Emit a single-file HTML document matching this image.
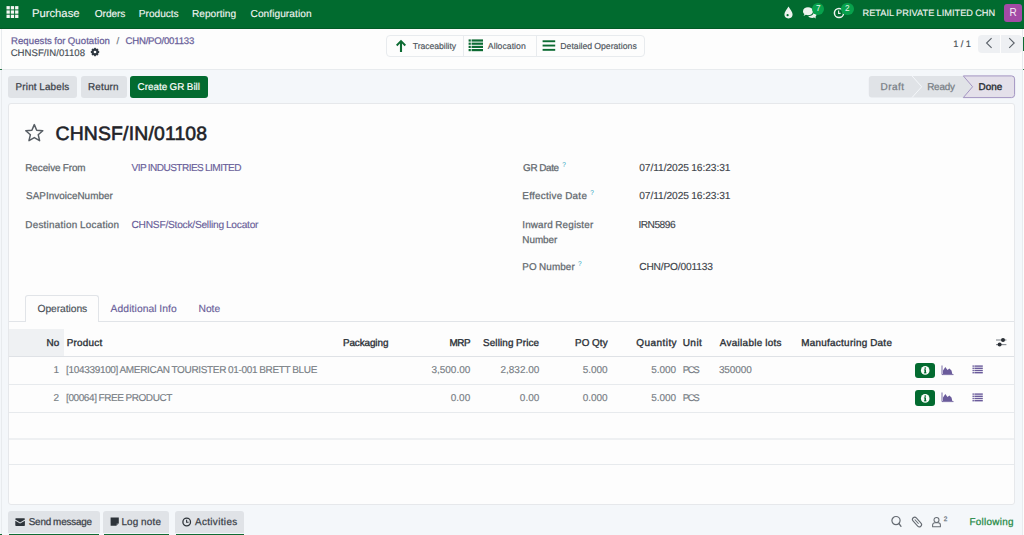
<!DOCTYPE html>
<html><head><meta charset="utf-8"><style>
*{margin:0;padding:0;box-sizing:border-box}
html,body{width:1024px;height:535px;overflow:hidden;background:#f4f7fa;font-family:"Liberation Sans",sans-serif}
.a{position:absolute}
.t{position:absolute;white-space:nowrap;line-height:normal;text-rendering:geometricPrecision}
.bl{display:inline-block;width:0;height:0;vertical-align:baseline}
</style></head><body>
<!-- navbar -->
<div class="a" style="left:0;top:0;width:1024px;height:28.6px;background:#016b2f"></div>
<div class="a" style="left:0;top:27.8px;width:1024px;height:0.9px;background:#015a26"></div>
<svg class="a" style="left:6.2px;top:5.9px" width="14" height="13" viewBox="0 0 14 13"><g fill="#f3f6f3"><rect x="0.5" y="0.1" width="3.3" height="3.3"/><rect x="4.8" y="0.1" width="3.3" height="3.3"/><rect x="9.1" y="0.1" width="3.3" height="3.3"/><rect x="0.5" y="4.4" width="3.3" height="3.3"/><rect x="4.8" y="4.4" width="3.3" height="3.3"/><rect x="9.1" y="4.4" width="3.3" height="3.3"/><rect x="0.5" y="8.7" width="3.3" height="3.3"/><rect x="4.8" y="8.7" width="3.3" height="3.3"/><rect x="9.1" y="8.7" width="3.3" height="3.3"/></g></svg>
<!-- droplet -->
<svg class="a" style="left:783px;top:6px" width="11" height="13" viewBox="0 0 11 13">
 <path d="M5.5 0.6 C7 3.2 9.6 6 9.6 8.3 A4.1 4.1 0 0 1 1.4 8.3 C1.4 6 4 3.2 5.5 0.6Z" fill="#eef3ee"/>
 <circle cx="4.6" cy="9.2" r="1.1" fill="#016b2f"/>
</svg>
<!-- chat bubbles -->
<svg class="a" style="left:802px;top:6px" width="16" height="13" viewBox="0 0 16 13">
 <path d="M1 5.2 C1 2.6 3.3 1.2 6 1.2 C8.7 1.2 11 2.6 11 5.2 C11 7.8 8.7 9.2 6 9.2 C5.2 9.2 4.5 9.1 3.9 8.8 L1.6 10 L2.4 8.1 C1.5 7.4 1 6.4 1 5.2Z" fill="#eef3ee"/>
 <path d="M6.2 10.3 C9.5 10.2 11.9 8.5 12.1 5.6 C13.6 6.2 14.5 7.3 14.5 8.6 C14.5 9.5 14.1 10.3 13.4 10.9 L14.1 12.6 L12 11.6 C11.5 11.8 10.9 11.9 10.3 11.9 C8.5 11.9 7 11.3 6.2 10.3Z" fill="#eef3ee"/>
</svg>
<div class="a" style="left:812px;top:2.8px;width:12.4px;height:12.4px;border-radius:50%;background:#08a14c"></div>
<div class="a" style="left:812px;top:3px;width:12.4px;text-align:center;font:8.2px 'Liberation Sans',sans-serif;color:#e8f3ea;line-height:12px">7</div>
<!-- clock -->
<svg class="a" style="left:833px;top:6px" width="13" height="13" viewBox="0 0 13 13">
 <circle cx="6" cy="7" r="4.6" fill="none" stroke="#eef3ee" stroke-width="1.5"/>
 <path d="M5.6 4.6 V7.4 H7.6" fill="none" stroke="#eef3ee" stroke-width="1.1"/>
</svg>
<div class="a" style="left:841.2px;top:2.8px;width:12.4px;height:12.4px;border-radius:50%;background:#08a14c"></div>
<div class="a" style="left:841.2px;top:3px;width:12.4px;text-align:center;font:8.2px 'Liberation Sans',sans-serif;color:#e8f3ea;line-height:12px">2</div>
<!-- avatar -->
<div class="a" style="left:1004px;top:4px;width:18px;height:17.6px;border-radius:3px;background:#a34aa6"></div>
<div class="a" style="left:1004px;top:4px;width:18px;height:17.6px;text-align:center;font:10px 'Liberation Sans',sans-serif;color:#f5eaf5;line-height:17.6px">R</div>

<!-- control panel -->
<div class="a" style="left:0;top:28.5px;width:1024px;height:41px;background:#fdfdfd;border-bottom:1px solid #e8ebee"></div>
<!-- gear -->
<svg class="a" style="left:90.3px;top:46.9px" width="10" height="10" viewBox="0 0 10 10">
 <g fill="#2f3841">
  <circle cx="5" cy="5" r="3.5"/>
  <rect x="4.1" y="0.8" width="1.8" height="8.4" rx="0.5"/>
  <rect x="4.1" y="0.8" width="1.8" height="8.4" rx="0.5" transform="rotate(45 5 5)"/>
  <rect x="4.1" y="0.8" width="1.8" height="8.4" rx="0.5" transform="rotate(90 5 5)"/>
  <rect x="4.1" y="0.8" width="1.8" height="8.4" rx="0.5" transform="rotate(135 5 5)"/>
 </g>
 <circle cx="5" cy="5" r="1.3" fill="#fdfdfd"/>
</svg>
<!-- button group -->
<div class="a" style="left:386.2px;top:34.8px;width:258.5px;height:22.7px;border:1px solid #e8ebee;border-radius:4px;background:#fdfdfd"></div>
<div class="a" style="left:463px;top:35px;width:1px;height:22.4px;background:#e8ebee"></div>
<div class="a" style="left:536px;top:35px;width:1px;height:22.4px;background:#e8ebee"></div>
<svg class="a" style="left:395px;top:39px" width="12" height="14" viewBox="0 0 12 14">
 <path d="M6 0.8 L11 5.8 L9.6 7.2 L7.05 4.6 V13 H4.95 V4.6 L2.4 7.2 L1 5.8Z" fill="#0d6b33"/>
</svg>
<svg class="a" style="left:468px;top:39px" width="16" height="13" viewBox="0 0 16 13">
 <g fill="#0d6b33">
  <rect x="0.6" y="0.4" width="2.2" height="2.2"/><rect x="3.6" y="0.4" width="11.4" height="2.2"/>
  <rect x="0.6" y="3.6" width="2.2" height="2.2"/><rect x="3.6" y="3.6" width="11.4" height="2.2"/>
  <rect x="0.6" y="6.8" width="2.2" height="2.2"/><rect x="3.6" y="6.8" width="11.4" height="2.2"/>
  <rect x="0.6" y="10" width="2.2" height="2.2"/><rect x="3.6" y="10" width="11.4" height="2.2"/>
 </g>
</svg>
<svg class="a" style="left:542px;top:40px" width="14" height="12" viewBox="0 0 14 12">
 <g fill="#0d6b33">
  <rect x="0.6" y="0.3" width="12.6" height="1.9"/>
  <rect x="0.6" y="4.6" width="12.6" height="1.9"/>
  <rect x="0.6" y="8.9" width="12.6" height="1.9"/>
 </g>
</svg>
<!-- pager -->
<div class="a" style="left:978.1px;top:34.8px;width:21.9px;height:17.8px;background:#eef0f3;border-radius:4px 0 0 4px"></div>
<div class="a" style="left:1001px;top:34.8px;width:21.3px;height:17.8px;background:#eef0f3;border-radius:0 4px 4px 0"></div>
<svg class="a" style="left:984px;top:37px" width="10" height="12" viewBox="0 0 10 12">
 <path d="M7.6 1.2 L2.6 6 L7.6 10.8" fill="none" stroke="#5a6068" stroke-width="1.1"/>
</svg>
<svg class="a" style="left:1007px;top:37px" width="10" height="12" viewBox="0 0 10 12">
 <path d="M2.2 1.2 L7.2 6 L2.2 10.8" fill="none" stroke="#5a6068" stroke-width="1.1"/>
</svg>

<!-- frame lines -->
<div class="a" style="left:1px;top:28.5px;width:1px;height:507px;background:#e8ebee"></div>
<div class="a" style="left:1022px;top:28.5px;width:1px;height:507px;background:#e8ebee"></div>
<div class="a" style="left:1023px;top:28.5px;width:1px;height:507px;background:#fdfdfd"></div>

<!-- action buttons -->
<div class="a" style="left:8.2px;top:75.8px;width:68.7px;height:22.1px;background:#e0e3e7;border-radius:3px"></div>
<div class="a" style="left:80.6px;top:75.8px;width:46.1px;height:22.1px;background:#e0e3e7;border-radius:3px"></div>
<div class="a" style="left:129.5px;top:75.8px;width:78px;height:22.1px;background:#036b30;border-radius:3px"></div>

<!-- statusbar -->
<svg class="a" style="left:868px;top:75px" width="148" height="24" viewBox="0 0 148 24">
 <path d="M3.8 0.9 H44 L53.7 11.75 L44 22.6 H3.8 A3 3 0 0 1 0.8 19.6 V3.9 A3 3 0 0 1 3.8 0.9Z" fill="#e0e3e7"/>
 <path d="M44 0.9 H95.3 L104.6 11.75 L95.3 22.6 H44 L53.7 11.75Z" fill="#e0e3e7"/>
 <path d="M44 0.9 L53.7 11.75 L44 22.6" fill="none" stroke="#f4f7fa" stroke-width="1"/>
 <path d="M95.3 0.9 H143.6 A3 3 0 0 1 146.6 3.9 V19.6 A3 3 0 0 1 143.6 22.6 H95.3 L104.6 11.75Z" fill="#e4e0ea" stroke="#a395c2" stroke-width="1"/>
</svg>

<!-- sheet -->
<div class="a" style="left:8px;top:103.2px;width:1007px;height:401.8px;background:#fdfdfd;border:1px solid #e6e8eb;border-radius:3px"></div>
<svg class="a" style="left:24px;top:122.5px" width="21" height="20" viewBox="0 0 21 20">
 <path d="M10.3 1.6 L12.7 7.2 L18.8 7.7 L14.2 11.7 L15.6 17.7 L10.3 14.6 L5 17.7 L6.4 11.7 L1.8 7.7 L7.9 7.2Z" fill="none" stroke="#575d64" stroke-width="1.5" stroke-linejoin="round"/>
</svg>
<!-- tooltips -->
<div class="a" style="left:562.2px;top:161px;font:6.5px 'Liberation Sans',sans-serif;color:#2aa3c0">?</div>
<div class="a" style="left:590.2px;top:189px;font:6.5px 'Liberation Sans',sans-serif;color:#2aa3c0">?</div>
<div class="a" style="left:578px;top:260px;font:6.5px 'Liberation Sans',sans-serif;color:#2aa3c0">?</div>

<!-- tabs -->
<div class="a" style="left:9px;top:321px;width:1005px;height:1px;background:#e1e4e8"></div>
<div class="a" style="left:25.3px;top:295px;width:74px;height:27px;background:#fdfdfd;border:1px solid #e1e4e8;border-bottom:none;border-radius:3px 3px 0 0"></div>

<!-- table -->
<div class="a" style="left:9px;top:329px;width:55px;height:27.5px;background:#eff1f3"></div>
<div class="a" style="left:9px;top:356px;width:1005px;height:1.2px;background:#dfe2e6"></div>
<div class="a" style="left:9px;top:383.6px;width:1005px;height:1px;background:#e7eaed"></div>
<div class="a" style="left:9px;top:411.6px;width:1005px;height:1px;background:#e7eaed"></div>
<div class="a" style="left:9px;top:438px;width:1005px;height:2px;background:#eef0f2"></div>
<div class="a" style="left:9px;top:464.4px;width:1005px;height:1px;background:#e7eaed"></div>
<svg class="a" style="left:994px;top:336px" width="15" height="12" viewBox="0 0 15 12">
 <g stroke="#8b9096" stroke-width="1.2"><path d="M2 4 H12.4"/><path d="M2 8.6 H12.4"/></g>
 <circle cx="9" cy="4" r="2" fill="#2b3036"/><circle cx="5.6" cy="8.6" r="2" fill="#2b3036"/>
</svg>
<!-- row icons -->
<div class="a" style="left:914.8px;top:362.8px;width:20.6px;height:15.7px;background:#036b30;border-radius:3px"></div>
<div class="a" style="left:914.8px;top:390px;width:20.6px;height:16.2px;background:#036b30;border-radius:3px"></div>
<svg class="a" style="left:919.6px;top:365.2px" width="11" height="11" viewBox="0 0 11 11">
 <circle cx="5.2" cy="5.4" r="4.3" fill="#fbfdfb"/>
 <rect x="4.5" y="4.5" width="1.5" height="3.6" fill="#036b30"/><rect x="3.9" y="7.4" width="2.6" height="0.9" fill="#036b30"/><rect x="3.9" y="4.5" width="1.6" height="0.8" fill="#036b30"/>
 <circle cx="5.25" cy="3" r="0.85" fill="#036b30"/>
</svg>
<svg class="a" style="left:919.6px;top:392.6px" width="11" height="11" viewBox="0 0 11 11">
 <circle cx="5.2" cy="5.4" r="4.3" fill="#fbfdfb"/>
 <rect x="4.5" y="4.5" width="1.5" height="3.6" fill="#036b30"/><rect x="3.9" y="7.4" width="2.6" height="0.9" fill="#036b30"/><rect x="3.9" y="4.5" width="1.6" height="0.8" fill="#036b30"/>
 <circle cx="5.25" cy="3" r="0.85" fill="#036b30"/>
</svg>
<svg class="a" style="left:941px;top:365px" width="13" height="11" viewBox="0 0 13 11">
 <path d="M1 0.5 V9.6 H12.5" fill="none" stroke="#6a5b9b" stroke-width="0.9"/>
 <path d="M2 9 L2 5.5 L4.3 2 L6.5 5 L8.4 3.6 L10.5 5.6 L11.3 9Z" fill="#6a5b9b"/>
</svg>
<svg class="a" style="left:941px;top:392.2px" width="13" height="11" viewBox="0 0 13 11">
 <path d="M1 0.5 V9.6 H12.5" fill="none" stroke="#6a5b9b" stroke-width="0.9"/>
 <path d="M2 9 L2 5.5 L4.3 2 L6.5 5 L8.4 3.6 L10.5 5.6 L11.3 9Z" fill="#6a5b9b"/>
</svg>
<svg class="a" style="left:971.5px;top:365px" width="12" height="10" viewBox="0 0 12 10">
 <g fill="#6a5b9b">
  <rect x="0.5" y="0.4" width="1.4" height="1.4"/><rect x="2.4" y="0.4" width="8.4" height="1.4"/>
  <rect x="0.5" y="2.6" width="1.4" height="1.4"/><rect x="2.4" y="2.6" width="8.4" height="1.4"/>
  <rect x="0.5" y="4.8" width="1.4" height="1.4"/><rect x="2.4" y="4.8" width="8.4" height="1.4"/>
  <rect x="0.5" y="7" width="1.4" height="1.4"/><rect x="2.4" y="7" width="8.4" height="1.4"/>
 </g>
</svg>
<svg class="a" style="left:971.5px;top:392.6px" width="12" height="10" viewBox="0 0 12 10">
 <g fill="#6a5b9b">
  <rect x="0.5" y="0.4" width="1.4" height="1.4"/><rect x="2.4" y="0.4" width="8.4" height="1.4"/>
  <rect x="0.5" y="2.6" width="1.4" height="1.4"/><rect x="2.4" y="2.6" width="8.4" height="1.4"/>
  <rect x="0.5" y="4.8" width="1.4" height="1.4"/><rect x="2.4" y="4.8" width="8.4" height="1.4"/>
  <rect x="0.5" y="7" width="1.4" height="1.4"/><rect x="2.4" y="7" width="8.4" height="1.4"/>
 </g>
</svg>

<!-- chatter -->
<div class="a" style="left:8.2px;top:511.3px;width:91.4px;height:21.9px;background:#e0e3e7;border-radius:3px 3px 0 0"></div>
<div class="a" style="left:103.2px;top:511.3px;width:65.8px;height:21.9px;background:#e0e3e7;border-radius:3px 3px 0 0"></div>
<div class="a" style="left:175.3px;top:511.3px;width:69px;height:21.9px;background:#e0e3e7;border-radius:3px 3px 0 0"></div>
<div class="a" style="left:9px;top:533.8px;width:89.5px;height:1.2px;background:#0f6b33"></div>
<div class="a" style="left:104px;top:533.8px;width:64.5px;height:1.2px;background:#0f6b33"></div>
<div class="a" style="left:176px;top:533.8px;width:67.5px;height:1.2px;background:#0f6b33"></div>
<svg class="a" style="left:15px;top:518px" width="11" height="9" viewBox="0 0 11 9">
 <path d="M0.3 1 A0.8 0.8 0 0 1 1.1 0.2 H9.1 A0.8 0.8 0 0 1 9.9 1 V1.6 L5.1 4.6 L0.3 1.6Z" fill="#2e343a"/>
 <path d="M0.3 2.7 L5.1 5.6 L9.9 2.7 V7.3 A0.8 0.8 0 0 1 9.1 8.1 H1.1 A0.8 0.8 0 0 1 0.3 7.3Z" fill="#2e343a"/>
</svg>
<svg class="a" style="left:110px;top:517px" width="10" height="10" viewBox="0 0 10 10">
 <path d="M0.6 0.6 H8.8 V6.2 L6.2 8.8 H0.6Z" fill="#2e343a"/>
 <path d="M6.6 8.8 V6.6 H8.8Z" fill="#8a9096"/>
</svg>
<svg class="a" style="left:182px;top:517px" width="10" height="10" viewBox="0 0 10 10">
 <circle cx="4.7" cy="5" r="3.8" fill="none" stroke="#2e343a" stroke-width="1.3"/>
 <path d="M4.6 2.8 V5.3 H6.6" fill="none" stroke="#2e343a" stroke-width="1.1"/>
</svg>
<svg class="a" style="left:890px;top:514px" width="13" height="14" viewBox="0 0 13 14">
 <circle cx="6" cy="6.6" r="4.1" fill="none" stroke="#666c73" stroke-width="1.2"/>
 <path d="M8.9 9.5 L11 12.3" stroke="#666c73" stroke-width="1.3" stroke-linecap="round"/>
</svg>
<svg class="a" style="left:910px;top:515px" width="14" height="14" viewBox="0 0 14 14">
 <g transform="rotate(-42 7 7)">
  <rect x="4.8" y="1.3" width="4.4" height="11.4" rx="2.2" fill="none" stroke="#666c73" stroke-width="1.1"/>
  <path d="M7 3.6 V9.4" stroke="#666c73" stroke-width="1"/>
 </g>
</svg>
<svg class="a" style="left:930.5px;top:515.5px" width="11" height="12" viewBox="0 0 11 12">
 <circle cx="5.5" cy="3.9" r="2.5" fill="none" stroke="#666c73" stroke-width="1.05"/>
 <path d="M1.6 10.8 V9 A2.3 2.3 0 0 1 3.9 6.7 H7.1 A2.3 2.3 0 0 1 9.4 9 V10.8Z" fill="none" stroke="#666c73" stroke-width="1.05" stroke-linejoin="round"/>
</svg>

<div class="a" style="left:0;top:68.6px;width:1.6px;height:1.2px;background:#2f7a4a"></div>
<div class="a" style="left:1023px;top:36.8px;width:1px;height:14px;background:#0f6b33"></div>
<div class="a" style="left:1023px;top:68.6px;width:1px;height:1.2px;background:#2f7a4a"></div>
<div class="a" style="left:0;top:533.6px;width:1.5px;height:1.4px;background:#0f6b33"></div>
<div class="t" id="nav_app" style="left:31.92px;top:7.90px;font-size:11.30px;letter-spacing:-0.012px;word-spacing:-0.52px;color:#f1f5f2;-webkit-text-stroke:0.12px currentColor;">Purchase<i class="bl"></i></div>
<div class="t" id="nav_o" style="left:94.86px;top:8.61px;font-size:10.15px;letter-spacing:-0.112px;word-spacing:-0.47px;color:#f1f5f2;-webkit-text-stroke:0.12px currentColor;">Orders<i class="bl"></i></div>
<div class="t" id="nav_p" style="left:138.86px;top:8.61px;font-size:10.15px;letter-spacing:-0.027px;word-spacing:-0.47px;color:#f1f5f2;-webkit-text-stroke:0.12px currentColor;">Products<i class="bl"></i></div>
<div class="t" id="nav_r" style="left:191.92px;top:8.61px;font-size:10.15px;letter-spacing:0.031px;word-spacing:-0.47px;color:#f1f5f2;-webkit-text-stroke:0.12px currentColor;">Reporting<i class="bl"></i></div>
<div class="t" id="nav_c" style="left:250.50px;top:8.61px;font-size:10.15px;letter-spacing:0.067px;word-spacing:-0.47px;color:#f1f5f2;-webkit-text-stroke:0.12px currentColor;">Configuration<i class="bl"></i></div>
<div class="t" id="nav_co" style="left:862.50px;top:8.21px;font-size:9.20px;letter-spacing:0.042px;word-spacing:-0.42px;color:#f1f5f2;-webkit-text-stroke:0.12px currentColor;">RETAIL PRIVATE LIMITED CHN<i class="bl"></i></div>
<div class="t" id="bc1" style="left:11.00px;top:35.71px;font-size:9.60px;letter-spacing:0.052px;word-spacing:-0.44px;color:#6a5f9a;-webkit-text-stroke:0.25px currentColor;">Requests for Quotation<i class="bl"></i></div>
<div class="t" id="bc_sl" style="left:116.44px;top:35.71px;font-size:9.60px;letter-spacing:0.000px;word-spacing:-0.44px;color:#6c757d;-webkit-text-stroke:0.15px currentColor;">/<i class="bl"></i></div>
<div class="t" id="bc2" style="left:125.50px;top:35.71px;font-size:9.60px;letter-spacing:-0.211px;word-spacing:-0.44px;color:#6a5f9a;-webkit-text-stroke:0.25px currentColor;">CHN/PO/001133<i class="bl"></i></div>
<div class="t" id="bc3" style="left:10.64px;top:47.51px;font-size:9.60px;letter-spacing:0.037px;word-spacing:-0.44px;color:#495057;-webkit-text-stroke:0.15px currentColor;">CHNSF/IN/01108<i class="bl"></i></div>
<div class="t" id="bg1" style="left:412.72px;top:40.81px;font-size:8.70px;letter-spacing:-0.063px;word-spacing:-0.40px;color:#4d545b;-webkit-text-stroke:0.15px currentColor;">Traceability<i class="bl"></i></div>
<div class="t" id="bg2" style="left:487.86px;top:40.81px;font-size:8.70px;letter-spacing:0.027px;word-spacing:-0.40px;color:#4d545b;-webkit-text-stroke:0.15px currentColor;">Allocation<i class="bl"></i></div>
<div class="t" id="bg3" style="left:560.28px;top:40.81px;font-size:8.70px;letter-spacing:0.005px;word-spacing:-0.40px;color:#4d545b;-webkit-text-stroke:0.15px currentColor;">Detailed Operations<i class="bl"></i></div>
<div class="t" id="pager" style="left:953.28px;top:37.60px;font-size:9.40px;letter-spacing:0.059px;word-spacing:-0.43px;color:#495057;-webkit-text-stroke:0.15px currentColor;">1 / 1<i class="bl"></i></div>
<div class="t" id="b_pl" style="left:15.50px;top:82.01px;font-size:9.90px;letter-spacing:0.189px;word-spacing:-0.46px;color:#3b4148;-webkit-text-stroke:0.25px currentColor;">Print Labels<i class="bl"></i></div>
<div class="t" id="b_rt" style="left:88.00px;top:82.01px;font-size:9.90px;letter-spacing:0.180px;word-spacing:-0.46px;color:#3b4148;-webkit-text-stroke:0.25px currentColor;">Return<i class="bl"></i></div>
<div class="t" id="b_gr" style="left:137.50px;top:82.01px;font-size:9.90px;letter-spacing:0.027px;word-spacing:-0.46px;color:#ffffff;-webkit-text-stroke:0.15px currentColor;">Create GR Bill<i class="bl"></i></div>
<div class="t" id="st_d" style="left:880.50px;top:82.01px;font-size:10.00px;letter-spacing:0.450px;word-spacing:-0.46px;color:#787e85;-webkit-text-stroke:0.25px currentColor;">Draft<i class="bl"></i></div>
<div class="t" id="st_r" style="left:927.14px;top:82.01px;font-size:9.90px;letter-spacing:-0.153px;word-spacing:-0.46px;color:#787e85;-webkit-text-stroke:0.25px currentColor;">Ready<i class="bl"></i></div>
<div class="t" id="st_dn" style="left:978.50px;top:82.01px;font-size:9.90px;letter-spacing:0.013px;word-spacing:-0.46px;color:#2a2f35;-webkit-text-stroke:0.25px currentColor;-webkit-text-stroke:0.4px currentColor;">Done<i class="bl"></i></div>
<div class="t" id="title" style="left:55.50px;top:123.10px;font-size:19.40px;letter-spacing:0.164px;word-spacing:-0.89px;color:#1f2328;-webkit-text-stroke:0.6px currentColor;">CHNSF/IN/01108<i class="bl"></i></div>
<div class="t" id="l1" style="left:25.28px;top:162.81px;font-size:9.90px;letter-spacing:-0.066px;word-spacing:-0.46px;color:#62686e;-webkit-text-stroke:0.25px currentColor;">Receive From<i class="bl"></i></div>
<div class="t" id="v1" style="left:131.50px;top:162.90px;font-size:10.08px;letter-spacing:-0.550px;word-spacing:-0.46px;color:#6a5f9a;-webkit-text-stroke:0.15px currentColor;">VIP INDUSTRIES LIMITED<i class="bl"></i></div>
<div class="t" id="l2" style="left:26.08px;top:190.71px;font-size:9.90px;letter-spacing:0.032px;word-spacing:-0.46px;color:#62686e;-webkit-text-stroke:0.25px currentColor;">SAPInvoiceNumber<i class="bl"></i></div>
<div class="t" id="l3" style="left:25.28px;top:220.01px;font-size:9.90px;letter-spacing:0.251px;word-spacing:-0.46px;color:#62686e;-webkit-text-stroke:0.25px currentColor;">Destination Location<i class="bl"></i></div>
<div class="t" id="v3" style="left:131.50px;top:220.11px;font-size:10.20px;letter-spacing:-0.237px;word-spacing:-0.47px;color:#6a5f9a;-webkit-text-stroke:0.15px currentColor;">CHNSF/Stock/Selling Locator<i class="bl"></i></div>
<div class="t" id="r1" style="left:523.08px;top:162.81px;font-size:9.90px;letter-spacing:-0.326px;word-spacing:-0.46px;color:#62686e;-webkit-text-stroke:0.25px currentColor;">GR Date<i class="bl"></i></div>
<div class="t" id="rv1" style="left:639.22px;top:162.90px;font-size:10.20px;letter-spacing:-0.053px;word-spacing:-0.47px;color:#3f454c;-webkit-text-stroke:0.15px currentColor;">07/11/2025 16:23:31<i class="bl"></i></div>
<div class="t" id="r2" style="left:522.28px;top:190.71px;font-size:9.90px;letter-spacing:0.290px;word-spacing:-0.46px;color:#62686e;-webkit-text-stroke:0.25px currentColor;">Effective Date<i class="bl"></i></div>
<div class="t" id="rv2" style="left:639.22px;top:190.81px;font-size:10.20px;letter-spacing:-0.053px;word-spacing:-0.47px;color:#3f454c;-webkit-text-stroke:0.15px currentColor;">07/11/2025 16:23:31<i class="bl"></i></div>
<div class="t" id="r3" style="left:522.28px;top:219.91px;font-size:9.90px;letter-spacing:0.161px;word-spacing:-0.46px;color:#62686e;-webkit-text-stroke:0.25px currentColor;">Inward Register<i class="bl"></i></div>
<div class="t" id="r3b" style="left:522.28px;top:234.60px;font-size:9.90px;letter-spacing:0.000px;word-spacing:-0.46px;color:#62686e;-webkit-text-stroke:0.25px currentColor;">Number<i class="bl"></i></div>
<div class="t" id="rv3" style="left:638.42px;top:220.01px;font-size:10.20px;letter-spacing:-0.498px;word-spacing:-0.47px;color:#3f454c;-webkit-text-stroke:0.15px currentColor;">IRN5896<i class="bl"></i></div>
<div class="t" id="r4" style="left:522.28px;top:261.81px;font-size:9.90px;letter-spacing:0.098px;word-spacing:-0.46px;color:#62686e;-webkit-text-stroke:0.25px currentColor;">PO Number<i class="bl"></i></div>
<div class="t" id="rv4" style="left:639.22px;top:261.90px;font-size:10.20px;letter-spacing:-0.174px;word-spacing:-0.47px;color:#3f454c;-webkit-text-stroke:0.15px currentColor;">CHN/PO/001133<i class="bl"></i></div>
<div class="t" id="tab1" style="left:37.50px;top:304.01px;font-size:10.30px;letter-spacing:-0.074px;word-spacing:-0.47px;color:#495057;-webkit-text-stroke:0.15px currentColor;">Operations<i class="bl"></i></div>
<div class="t" id="tab2" style="left:110.58px;top:304.01px;font-size:10.30px;letter-spacing:0.091px;word-spacing:-0.47px;color:#6a5f9a;-webkit-text-stroke:0.15px currentColor;">Additional Info<i class="bl"></i></div>
<div class="t" id="tab3" style="left:198.56px;top:304.01px;font-size:10.30px;letter-spacing:-0.044px;word-spacing:-0.47px;color:#6a5f9a;-webkit-text-stroke:0.15px currentColor;">Note<i class="bl"></i></div>
<div class="t" id="h_no" style="left:46.42px;top:337.51px;font-size:9.90px;letter-spacing:0.228px;word-spacing:-0.46px;color:#2b3036;-webkit-text-stroke:0.25px currentColor;-webkit-text-stroke:0.35px currentColor;">No<i class="bl"></i></div>
<div class="t" id="h_pr" style="left:66.64px;top:337.51px;font-size:9.90px;letter-spacing:0.274px;word-spacing:-0.46px;color:#2b3036;-webkit-text-stroke:0.25px currentColor;-webkit-text-stroke:0.35px currentColor;">Product<i class="bl"></i></div>
<div class="t" id="h_pk" style="left:342.92px;top:337.51px;font-size:9.90px;letter-spacing:-0.079px;word-spacing:-0.46px;color:#2b3036;-webkit-text-stroke:0.25px currentColor;-webkit-text-stroke:0.35px currentColor;">Packaging<i class="bl"></i></div>
<div class="t" id="h_mrp" style="left:449.50px;top:337.51px;font-size:9.90px;letter-spacing:-0.439px;word-spacing:-0.46px;color:#2b3036;-webkit-text-stroke:0.25px currentColor;-webkit-text-stroke:0.35px currentColor;">MRP<i class="bl"></i></div>
<div class="t" id="h_sp" style="left:483.00px;top:337.51px;font-size:9.90px;letter-spacing:0.134px;word-spacing:-0.46px;color:#2b3036;-webkit-text-stroke:0.25px currentColor;-webkit-text-stroke:0.35px currentColor;">Selling Price<i class="bl"></i></div>
<div class="t" id="h_po" style="left:575.00px;top:337.51px;font-size:9.90px;letter-spacing:0.157px;word-spacing:-0.46px;color:#2b3036;-webkit-text-stroke:0.25px currentColor;-webkit-text-stroke:0.35px currentColor;">PO Qty<i class="bl"></i></div>
<div class="t" id="h_q" style="left:636.22px;top:337.50px;font-size:10.01px;letter-spacing:0.450px;word-spacing:-0.46px;color:#2b3036;-webkit-text-stroke:0.25px currentColor;-webkit-text-stroke:0.35px currentColor;">Quantity<i class="bl"></i></div>
<div class="t" id="h_u" style="left:682.64px;top:337.51px;font-size:10.08px;letter-spacing:0.450px;word-spacing:-0.46px;color:#2b3036;-webkit-text-stroke:0.25px currentColor;-webkit-text-stroke:0.35px currentColor;">Unit<i class="bl"></i></div>
<div class="t" id="h_al" style="left:719.72px;top:337.51px;font-size:9.90px;letter-spacing:0.326px;word-spacing:-0.46px;color:#2b3036;-webkit-text-stroke:0.25px currentColor;-webkit-text-stroke:0.35px currentColor;">Available lots<i class="bl"></i></div>
<div class="t" id="h_md" style="left:801.14px;top:337.51px;font-size:9.90px;letter-spacing:0.296px;word-spacing:-0.46px;color:#2b3036;-webkit-text-stroke:0.25px currentColor;-webkit-text-stroke:0.35px currentColor;">Manufacturing Date<i class="bl"></i></div>
<div class="t" id="rn0" style="left:53.40px;top:365.21px;font-size:10.00px;letter-spacing:0.000px;word-spacing:-0.46px;color:#787e85;-webkit-text-stroke:0.15px currentColor;">1<i class="bl"></i></div>
<div class="t" id="rp0" style="left:66.06px;top:365.21px;font-size:10.00px;letter-spacing:-0.328px;word-spacing:-0.46px;color:#787e85;-webkit-text-stroke:0.15px currentColor;">[104339100] AMERICAN TOURISTER 01-001 BRETT BLUE<i class="bl"></i></div>
<div class="t" id="rm0" style="left:431.38px;top:365.21px;font-size:10.00px;letter-spacing:0.000px;word-spacing:-0.46px;color:#787e85;-webkit-text-stroke:0.15px currentColor;">3,500.00<i class="bl"></i></div>
<div class="t" id="rs0" style="left:500.46px;top:365.21px;font-size:10.00px;letter-spacing:0.000px;word-spacing:-0.46px;color:#787e85;-webkit-text-stroke:0.15px currentColor;">2,832.00<i class="bl"></i></div>
<div class="t" id="rpo0" style="left:582.64px;top:365.21px;font-size:10.00px;letter-spacing:0.000px;word-spacing:-0.46px;color:#787e85;-webkit-text-stroke:0.15px currentColor;">5.000<i class="bl"></i></div>
<div class="t" id="rq0" style="left:651.14px;top:365.21px;font-size:10.00px;letter-spacing:0.000px;word-spacing:-0.46px;color:#787e85;-webkit-text-stroke:0.15px currentColor;">5.000<i class="bl"></i></div>
<div class="t" id="ru0" style="left:682.64px;top:365.21px;font-size:9.70px;letter-spacing:-1.391px;word-spacing:-0.45px;color:#787e85;-webkit-text-stroke:0.15px currentColor;">PCS<i class="bl"></i></div>
<div class="t" id="rl0" style="left:718.92px;top:365.21px;font-size:10.00px;letter-spacing:-0.100px;word-spacing:-0.46px;color:#787e85;-webkit-text-stroke:0.15px currentColor;">350000<i class="bl"></i></div>
<div class="t" id="rn1" style="left:53.40px;top:393.01px;font-size:10.00px;letter-spacing:0.000px;word-spacing:-0.46px;color:#787e85;-webkit-text-stroke:0.15px currentColor;">2<i class="bl"></i></div>
<div class="t" id="rp1" style="left:66.06px;top:393.01px;font-size:10.00px;letter-spacing:-0.409px;word-spacing:-0.46px;color:#787e85;-webkit-text-stroke:0.15px currentColor;">[00064] FREE PRODUCT<i class="bl"></i></div>
<div class="t" id="rm1" style="left:450.78px;top:393.01px;font-size:10.00px;letter-spacing:0.000px;word-spacing:-0.46px;color:#787e85;-webkit-text-stroke:0.15px currentColor;">0.00<i class="bl"></i></div>
<div class="t" id="rs1" style="left:519.86px;top:393.01px;font-size:10.00px;letter-spacing:0.000px;word-spacing:-0.46px;color:#787e85;-webkit-text-stroke:0.15px currentColor;">0.00<i class="bl"></i></div>
<div class="t" id="rpo1" style="left:582.64px;top:393.01px;font-size:10.00px;letter-spacing:0.000px;word-spacing:-0.46px;color:#787e85;-webkit-text-stroke:0.15px currentColor;">0.000<i class="bl"></i></div>
<div class="t" id="rq1" style="left:651.14px;top:393.01px;font-size:10.00px;letter-spacing:0.000px;word-spacing:-0.46px;color:#787e85;-webkit-text-stroke:0.15px currentColor;">5.000<i class="bl"></i></div>
<div class="t" id="ru1" style="left:682.64px;top:393.00px;font-size:9.70px;letter-spacing:-1.391px;word-spacing:-0.45px;color:#787e85;-webkit-text-stroke:0.15px currentColor;">PCS<i class="bl"></i></div>
<div class="t" id="c_sm" style="left:28.72px;top:517.11px;font-size:9.90px;letter-spacing:-0.189px;word-spacing:-0.46px;color:#3b4148;-webkit-text-stroke:0.25px currentColor;">Send message<i class="bl"></i></div>
<div class="t" id="c_ln" style="left:121.42px;top:517.11px;font-size:9.90px;letter-spacing:0.221px;word-spacing:-0.46px;color:#3b4148;-webkit-text-stroke:0.25px currentColor;">Log note<i class="bl"></i></div>
<div class="t" id="c_ac" style="left:194.94px;top:517.11px;font-size:9.90px;letter-spacing:0.366px;word-spacing:-0.46px;color:#3b4148;-webkit-text-stroke:0.25px currentColor;">Activities<i class="bl"></i></div>
<div class="t" id="c_fl" style="left:969.50px;top:517.11px;font-size:9.90px;letter-spacing:0.290px;word-spacing:-0.46px;color:#1f8a45;-webkit-text-stroke:0.25px currentColor;">Following<i class="bl"></i></div>
<div class="t" id="c_2" style="left:943.72px;top:516.31px;font-size:6.50px;letter-spacing:0.000px;word-spacing:-0.30px;color:#6c757d;-webkit-text-stroke:0.25px currentColor;">2<i class="bl"></i></div>
</body></html>
